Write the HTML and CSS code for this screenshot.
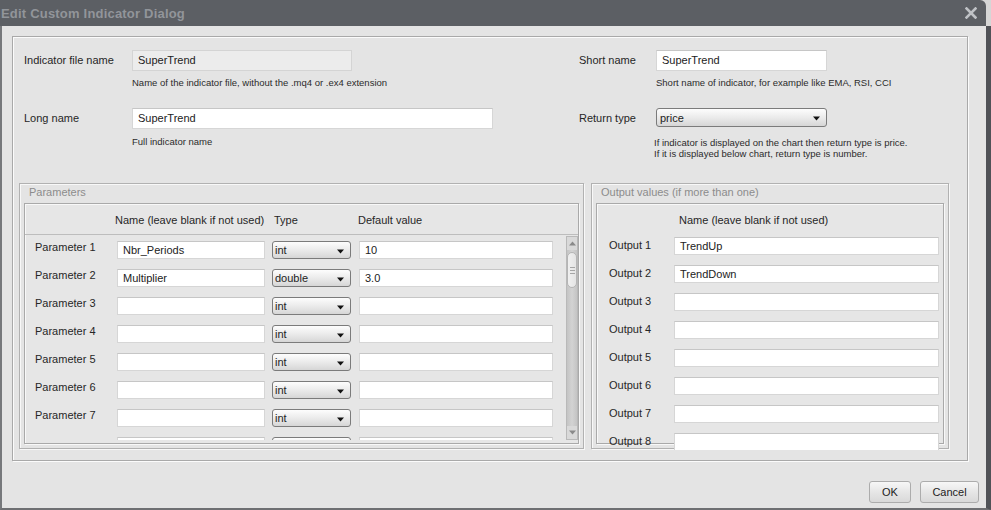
FILE: index.html
```html
<!DOCTYPE html>
<html>
<head>
<meta charset="utf-8">
<link rel="stylesheet" href="styles.css">
</head>
<body>
<div class="window">
  <div class="titlebar">
    <span class="title">Edit Custom Indicator Dialog</span>
    <svg class="close" width="12" height="12" viewBox="0 0 12 12"><path d="M1.5 1.5 L10.5 10.5 M10.5 1.5 L1.5 10.5" stroke="#bfc2c6" stroke-width="2.6" stroke-linecap="square"/></svg>
  </div>
  <div class="content">
    <div class="panel">
      <div class="top">
        <div class="col col-left">
          <div class="field f1">
            <div class="label lw1">Indicator file name</div>
            <div class="ctl">
              <div class="input disabled w-file">SuperTrend</div>
              <div class="hint">Name of the indicator file, without the .mq4 or .ex4 extension</div>
            </div>
          </div>
          <div class="field">
            <div class="label lw1">Long name</div>
            <div class="ctl">
              <div class="input w-long">SuperTrend</div>
              <div class="hint hint2">Full indicator name</div>
            </div>
          </div>
        </div>
        <div class="col col-right">
          <div class="field f1">
            <div class="label lw2">Short name</div>
            <div class="ctl">
              <div class="input w-short">SuperTrend</div>
              <div class="hint">Short name of indicator, for example like EMA, RSI, CCI</div>
            </div>
          </div>
          <div class="field">
            <div class="label lw2">Return type</div>
            <div class="ctl">
              <div class="select w-ret"><span>price</span><svg class="arr" width="7" height="5" viewBox="0 0 7 5"><path d="M0 0.5 H7 L3.5 4.5 Z" fill="#111"/></svg></div>
              <div class="hint hint3">If indicator is displayed on the chart then return type is price.<br>If it is displayed below chart, return type is number.</div>
            </div>
          </div>
        </div>
      </div>
      <div class="groups">
        <div class="group g-params">
          <div class="legend">Parameters</div>
          <div class="inner">
            <div class="phead">
              <span class="h-name">Name (leave blank if not used)</span>
              <span class="h-type">Type</span>
              <span class="h-def">Default value</span>
            </div>
            <div class="scrollarea">
              <div class="prows">
                <div class="prow"><div class="rlabel">Parameter 1</div><div class="input pname">Nbr_Periods</div><div class="select psel"><span>int</span><svg class="arr" width="7" height="5" viewBox="0 0 7 5"><path d="M0 0.5 H7 L3.5 4.5 Z" fill="#111"/></svg></div><div class="input pdef">10</div></div>
                <div class="prow"><div class="rlabel">Parameter 2</div><div class="input pname">Multiplier</div><div class="select psel"><span>double</span><svg class="arr" width="7" height="5" viewBox="0 0 7 5"><path d="M0 0.5 H7 L3.5 4.5 Z" fill="#111"/></svg></div><div class="input pdef">3.0</div></div>
                <div class="prow"><div class="rlabel">Parameter 3</div><div class="input pname"></div><div class="select psel"><span>int</span><svg class="arr" width="7" height="5" viewBox="0 0 7 5"><path d="M0 0.5 H7 L3.5 4.5 Z" fill="#111"/></svg></div><div class="input pdef"></div></div>
                <div class="prow"><div class="rlabel">Parameter 4</div><div class="input pname"></div><div class="select psel"><span>int</span><svg class="arr" width="7" height="5" viewBox="0 0 7 5"><path d="M0 0.5 H7 L3.5 4.5 Z" fill="#111"/></svg></div><div class="input pdef"></div></div>
                <div class="prow"><div class="rlabel">Parameter 5</div><div class="input pname"></div><div class="select psel"><span>int</span><svg class="arr" width="7" height="5" viewBox="0 0 7 5"><path d="M0 0.5 H7 L3.5 4.5 Z" fill="#111"/></svg></div><div class="input pdef"></div></div>
                <div class="prow"><div class="rlabel">Parameter 6</div><div class="input pname"></div><div class="select psel"><span>int</span><svg class="arr" width="7" height="5" viewBox="0 0 7 5"><path d="M0 0.5 H7 L3.5 4.5 Z" fill="#111"/></svg></div><div class="input pdef"></div></div>
                <div class="prow"><div class="rlabel">Parameter 7</div><div class="input pname"></div><div class="select psel"><span>int</span><svg class="arr" width="7" height="5" viewBox="0 0 7 5"><path d="M0 0.5 H7 L3.5 4.5 Z" fill="#111"/></svg></div><div class="input pdef"></div></div>
                <div class="prow"><div class="rlabel"></div><div class="input pname"></div><div class="select psel"></div><div class="input pdef"></div></div>
              </div>
              <div class="scrollbar">
                <div class="sb-btn"><svg width="7" height="5" viewBox="0 0 7 5"><path d="M0 4.5 H7 L3.5 0.5 Z" fill="#8a8a8a"/></svg></div>
                <div class="sb-thumb"><span></span><span></span><span></span></div>
                <div class="sb-track"></div>
                <div class="sb-btn"><svg width="7" height="5" viewBox="0 0 7 5"><path d="M0 0.5 H7 L3.5 4.5 Z" fill="#8a8a8a"/></svg></div>
              </div>
            </div>
          </div>
        </div>
        <div class="group g-out">
          <div class="legend">Output values (if more than one)</div>
          <div class="inner inner-out">
            <div class="ohead"><span>Name (leave blank if not used)</span></div>
            <div class="orows">
              <div class="orow"><div class="olabel">Output 1</div><div class="input oname">TrendUp</div></div>
              <div class="orow"><div class="olabel">Output 2</div><div class="input oname">TrendDown</div></div>
              <div class="orow"><div class="olabel">Output 3</div><div class="input oname"></div></div>
              <div class="orow"><div class="olabel">Output 4</div><div class="input oname"></div></div>
              <div class="orow"><div class="olabel">Output 5</div><div class="input oname"></div></div>
              <div class="orow"><div class="olabel">Output 6</div><div class="input oname"></div></div>
              <div class="orow"><div class="olabel">Output 7</div><div class="input oname"></div></div>
              <div class="orow"><div class="olabel">Output 8</div><div class="input oname"></div></div>
            </div>
          </div>
        </div>
      </div>
    </div>
    <div class="buttons">
      <div class="btn btn-ok">OK</div>
      <div class="btn btn-cancel">Cancel</div>
    </div>
  </div>
</div>
</body>
</html>
```

FILE: styles.css
```css
html, body {
  margin: 0;
  padding: 0;
}
body {
  width: 991px;
  height: 510px;
  overflow: hidden;
  background: #d6d6d6;
  font-family: "Liberation Sans", Arial, sans-serif;
  font-size: 11px;
  color: #262626;
}
.window {
  display: flex;
  flex-direction: column;
  width: 991px;
  height: 510px;
}
.titlebar {
  width: 986px;
  height: 26px;
  box-sizing: border-box;
  background: #5c5f64;
  border-top-right-radius: 6px;
  display: flex;
  align-items: center;
  justify-content: space-between;
  padding: 0 9px 0 1px;
}
.title {
  font-size: 13px;
  font-weight: bold;
  color: #92959a;
  letter-spacing: 0.2px;
}
.close {
  display: block;
  margin-top: -1px;
}
.content {
  flex: 1;
  display: flex;
  flex-direction: column;
  background: #e4e4e4;
  border-left: 2px solid #76787b;
  border-bottom: 2px solid #6e6f72;
  border-right: 5px solid #505257;
}
.panel {
  margin: 10px 18px 0 10px;
  height: 425px;
  box-sizing: border-box;
  border: 1px solid #a9a9a9;
  box-shadow: inset 1px 1px 0 #fbfbfb, 1px 1px 0 #fbfbfb;
  display: flex;
  flex-direction: column;
}
.top {
  height: 146px;
  box-sizing: border-box;
  padding: 13px 0 0 11px;
  display: flex;
}
.col-left { width: 555px; }
.col { display: flex; flex-direction: column; }
.field { display: flex; align-items: flex-start; }
.field.f1 { height: 58px; }
.label {
  line-height: 21px;
  font-size: 11px;
  color: #262626;
}
.lw1 { width: 108px; }
.lw2 { width: 77px; }
.ctl { display: flex; flex-direction: column; }
.input {
  box-sizing: border-box;
  height: 21px;
  background: #fff;
  border: 1px solid #d6d6d6;
  border-top-color: #c6c6c6;
  padding-left: 5px;
  line-height: 19px;
  font-size: 11px;
  color: #222;
  white-space: nowrap;
  overflow: hidden;
}
.input.disabled { background: #ececec; border-color: #d4d4d4; }
.w-file { width: 220px; }
.w-long { width: 361px; }
.w-short { width: 171px; }
.hint {
  font-size: 9.5px;
  line-height: 12px;
  margin-top: 6px;
  color: #2b2b2b;
}
.hint2 { margin-top: 7px; }
.hint3 { margin-top: 10px; line-height: 11px; margin-left: -2px; }
.select {
  box-sizing: border-box;
  height: 19px;
  border: 1px solid #7b7b7b;
  border-radius: 3px;
  background: linear-gradient(#fdfdfd, #e9e9e9 55%, #d6d6d6);
  display: flex;
  align-items: center;
  justify-content: space-between;
  padding: 0 6px 0 2px;
  font-size: 11px;
  color: #222;
}
.select .arr { display: block; margin-top: 2px; }
.w-ret { width: 171px; padding-left: 3px; }
.groups {
  display: flex;
  gap: 7px;
  padding-left: 6px;
}
.group {
  height: 266px;
  box-sizing: border-box;
  border: 1px solid #b1b1b1;
  box-shadow: inset 1px 1px 0 #f8f8f8, 1px 1px 0 #f8f8f8;
  padding: 0 4px 4px 4px;
  display: flex;
  flex-direction: column;
}
.g-params { width: 565px; }
.g-out { width: 358px; }
.legend {
  height: 19px;
  line-height: 17px;
  padding-left: 5px;
  color: #8c8c8c;
  font-size: 11px;
}
.inner {
  height: 241px;
  box-sizing: border-box;
  border: 1px solid #a9a9a9;
  box-shadow: inset 1px 1px 0 #f8f8f8, 1px 1px 0 #f8f8f8;
  background: #e6e6e6;
  display: flex;
  flex-direction: column;
}
.phead {
  height: 31px;
  box-sizing: border-box;
  border-bottom: 1px solid #bdbdbd;
  display: flex;
  align-items: center;
  padding-left: 90px;
  padding-top: 1px;
}
.h-name { width: 159px; }
.h-type { width: 84px; }
.scrollarea {
  display: flex;
  height: 205px;
  overflow: hidden;
}
.prows {
  width: 539px;
  padding: 6px 0 0 10px;
  box-sizing: border-box;
  display: flex;
  flex-direction: column;
  gap: 10px;
}
.prow {
  display: flex;
  align-items: flex-start;
  flex-shrink: 0;
}
.rlabel {
  width: 82px;
  height: 14px;
  line-height: 14px;
  margin-top: -1px;
}
.prow .input { height: 18px; line-height: 16px; }
.pname { width: 148px; }
.psel { width: 79px; height: 18px; margin-left: 7px; }
.pdef { width: 194px; margin-left: 8px; }
.scrollbar {
  width: 12px;
  margin-left: 3px;
  margin-top: 1px;
  height: 204px;
  box-sizing: border-box;
  border: 1px solid #b9b9b9;
  background: linear-gradient(90deg, #c4c4c4, #d3d3d3 50%, #c4c4c4);
  display: flex;
  flex-direction: column;
}
.sb-btn {
  height: 13px;
  display: flex;
  align-items: center;
  justify-content: center;
  background: #d9d9d9;
}
.sb-thumb {
  margin: 2px 0 0 0;
  height: 36px;
  border-radius: 5px;
  background: linear-gradient(90deg, #f0f0f0, #e4e4e4);
  border: 1px solid #b5b5b5;
  box-sizing: border-box;
  display: flex;
  flex-direction: column;
  align-items: center;
  justify-content: center;
  gap: 2px;
}
.sb-thumb span {
  display: block;
  width: 5px;
  height: 1px;
  background: #a5a5a5;
}
.sb-track { flex: 1; }
.inner-out { overflow: visible; }
.ohead {
  height: 31px;
  flex-shrink: 0;
  display: flex;
  align-items: center;
  padding-left: 82px;
  padding-top: 1px;
  box-sizing: border-box;
}
.orows {
  height: 215px;
  flex-shrink: 0;
  overflow: hidden;
  padding: 2px 0 0 12px;
  box-sizing: border-box;
  display: flex;
  flex-direction: column;
  gap: 10px;
}
.orow { display: flex; align-items: flex-start; flex-shrink: 0; }
.olabel { width: 65px; line-height: 16px; }
.orow .input { height: 18px; line-height: 16px; }
.oname { width: 265px; }
.buttons {
  display: flex;
  justify-content: flex-end;
  gap: 9px;
  margin-top: 20px;
  padding-right: 7px;
}
.btn {
  height: 22px;
  box-sizing: border-box;
  border: 1px solid #acacac;
  border-radius: 3px;
  background: linear-gradient(#f7f7f7, #e6e6e6 50%, #d9d9d9);
  display: flex;
  align-items: center;
  justify-content: center;
  font-size: 11px;
  color: #222;
}
.btn-ok { width: 42px; }
.btn-cancel { width: 59px; }
```
